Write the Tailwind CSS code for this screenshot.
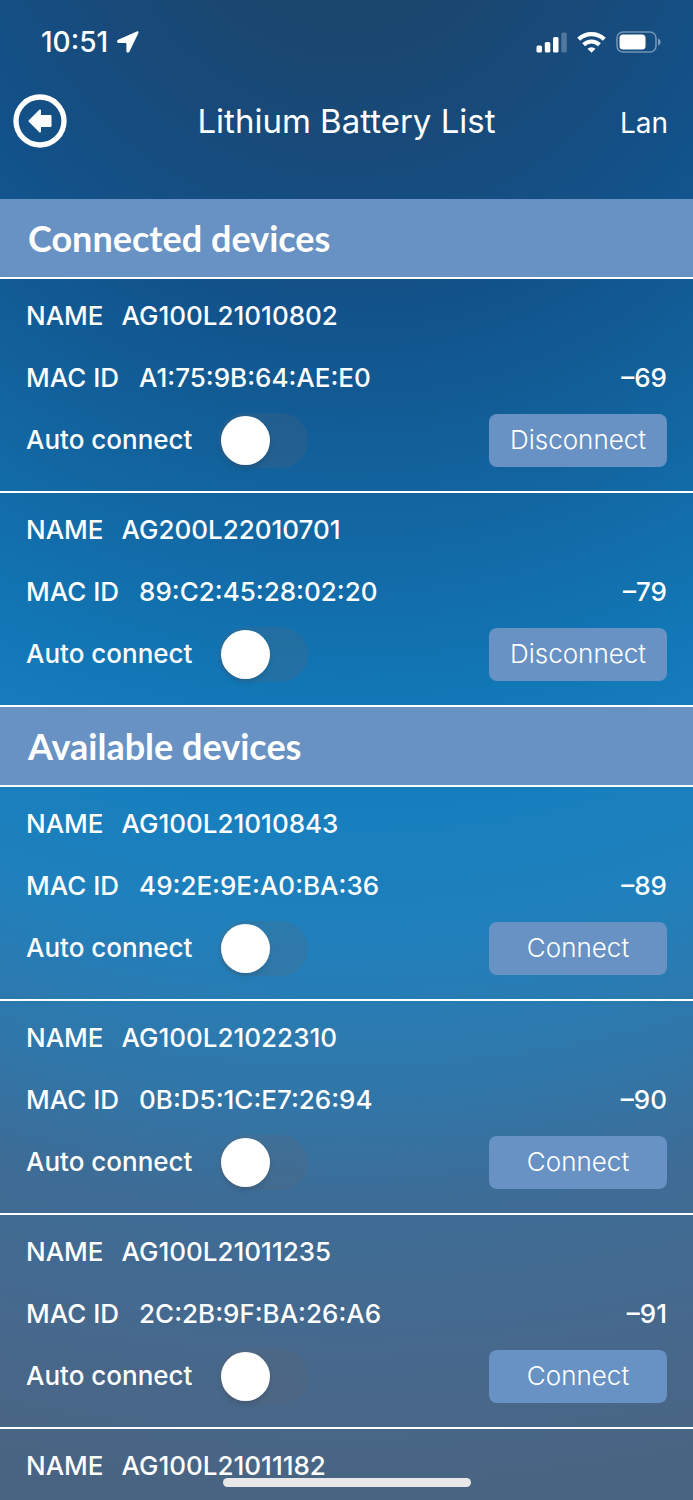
<!DOCTYPE html>
<html lang="en">
<head>
  <meta charset="UTF-8" />
  <meta name="viewport" content="width=device-width, initial-scale=1.0"/>
  <title>Lithium Battery List</title>
  <script src="https://cdn.jsdelivr.net/npm/@tailwindcss/browser@4"></script>
</head>
<body class="min-h-screen text-white font-['Inter',sans-serif] bg-[radial-gradient(circle_at_50%_-120px,#1b466c_120px,#184a7a_265px,#12528a_430px,#12639e_610px,#1277b6_820px,#187fbe_940px,#1f80bc_1050px,#2a7bb2_1140px,#3275a6_1230px,#3d6c96_1325px,#446a90_1425px,#486789_1525px,#496482_1625px)]">

  <header class="pb-[41px]">
    <!-- Status bar -->
    <div class="flex h-[84px] items-center justify-between pl-[41px] pr-8">
      <div class="flex items-center gap-2">
        <span class="text-[28px] leading-8 font-medium">10:51</span>
        <svg class="h-[22px] w-[23px]" viewBox="0 0 23 22" fill="#fff" aria-hidden="true">
          <path d="M20.800.5 2.100 8.700C.4 9.500.9 12 2.700 12H9.800c.4 0 .6.2.6.6v7.400c0 1.900 2.300 2.300 3.100.6L22.300 2.200C22.900.9 22.100 0 20.800.5z"/>
        </svg>
      </div>
      <div class="flex items-center gap-[10px]">
        <svg class="h-[21px] w-[31px]" viewBox="0 0 31 21" fill="#fff" aria-hidden="true">
          <rect x=".5" y="13.500" width="5.500" height="7" rx="1.600"/>
          <rect x="8.800" y="10" width="5.500" height="10.500" rx="1.600"/>
          <rect x="17" y="5" width="5.500" height="15.500" rx="1.600"/>
          <rect x="25.300" y=".5" width="5.500" height="20" rx="1.600" opacity=".25"/>
        </svg>
        <svg class="h-[21px] w-[29px]" viewBox="0 0 29 21" fill="none" stroke="#fff" stroke-width="4.200" aria-hidden="true">
          <path d="M1.700 7.300a18.400 18.400 0 0 1 25.600 0"/>
          <path d="M6.600 12.700a11.300 11.300 0 0 1 15.800 0"/>
          <path d="M14.500 20.800l-4-4a6 6 0 0 1 8 0z" fill="#fff" stroke="none"/>
        </svg>
        <svg class="h-[22px] w-[45px]" viewBox="0 0 45 22" fill="none" aria-hidden="true">
          <rect x="1" y="1" width="39" height="20" rx="6" stroke="#fff" stroke-opacity=".4" stroke-width="1.600"/>
          <rect x="3.500" y="3.500" width="26" height="15" rx="3.500" fill="#fff"/>
          <path d="M42 7.500c3.500 1.200 3.500 5.800 0 7z" fill="#fff" fill-opacity=".45"/>
        </svg>
      </div>
    </div>

    <!-- Title bar -->
    <div class="grid h-[74px] grid-cols-[1fr_auto_1fr] items-center px-[13px]">
      <button type="button" aria-label="Back" class="h-[54px] w-[54px]">
        <svg viewBox="0 0 54 54" fill="none" aria-hidden="true">
          <circle cx="27" cy="27" r="24" stroke="#fff" stroke-width="5.300"/>
          <path d="M16.500 27 27 16.500v5.500h10.500v10H27v5.500z" fill="#fff" stroke="#fff" stroke-width="2" stroke-linejoin="round"/>
        </svg>
      </button>
      <h1 class="text-[33px] leading-10 font-normal">Lithium Battery List</h1>
      <button type="button" class="mr-3 justify-self-end pt-1 text-[28px] leading-10 font-normal">Lan</button>
    </div>
  </header>

  <main>
    <section>
      <h2 class="h-20 border-b-2 border-white bg-[#6892c3] px-7 text-[36px] leading-[78px] font-bold font-['Lato',sans-serif]">Connected devices</h2>
      <ul id="connected"></ul>
    </section>
    <section>
      <h2 class="h-20 border-b-2 border-white bg-[#6892c3] px-7 text-[36px] leading-[78px] font-bold font-['Lato',sans-serif]">Available devices</h2>
      <ul id="available"></ul>
    </section>
  </main>

  <!-- Home indicator -->
  <div class="fixed bottom-[13px] left-1/2 h-[9px] w-[248px] -translate-x-1/2 rounded-full bg-[#e8e8e8]"></div>

  <script>
    const connected = [
      { name: "AG100L21010802", mac: "A1:75:9B:64:AE:E0", rssi: 69 },
      { name: "AG200L22010701", mac: "89:C2:45:28:02:20", rssi: 79 }
    ];

    const available = [
      { name: "AG100L21010843", mac: "49:2E:9E:A0:BA:36", rssi: 89 },
      { name: "AG100L21022310", mac: "0B:D5:1C:E7:26:94", rssi: 90 },
      { name: "AG100L21011235", mac: "2C:2B:9F:BA:26:A6", rssi: 91 },
      { name: "AG100L21011182" }
    ];

    function renderRow(device, action) {
      const nameLine = `
        <div class="flex h-[62px] items-center gap-[18px]">
          <span>NAME</span><span>${device.name}</span>
        </div>`;

      // Details not received yet
      if (!device.mac) {
        return `<li class="px-[26px] pt-[6px] text-[26px] leading-8 font-medium">${nameLine}</li>`;
      }

      return `
        <li class="border-b-2 border-white px-[26px] pt-[6px] pb-5 text-[26px] leading-8 font-medium">
          ${nameLine}
          <div class="flex h-[62px] items-center gap-5">
            <span>MAC ID</span><span>${device.mac}</span>
            <span class="ml-auto">–${device.rssi}</span>
          </div>
          <div class="flex h-[62px] items-center">
            <label for="auto-${device.name}">Auto connect</label>
            <input id="auto-${device.name}" type="checkbox" role="switch" class="ml-[26px] h-[55px] w-[90px] appearance-none rounded-full bg-[#64646e]/20 p-[3px] before:block before:h-[49px] before:w-[49px] before:rounded-full before:bg-white before:shadow-md checked:bg-green-500 checked:before:ml-auto">
            <button type="button" class="ml-auto h-[53px] w-[178px] rounded-lg bg-[#6892c3] font-light">${action}</button>
          </div>
        </li>`;
    }

    document.getElementById("connected").innerHTML = connected.map(d => renderRow(d, "Disconnect")).join("");
    document.getElementById("available").innerHTML = available.map(d => renderRow(d, "Connect")).join("");
  </script>
</body>
</html>
